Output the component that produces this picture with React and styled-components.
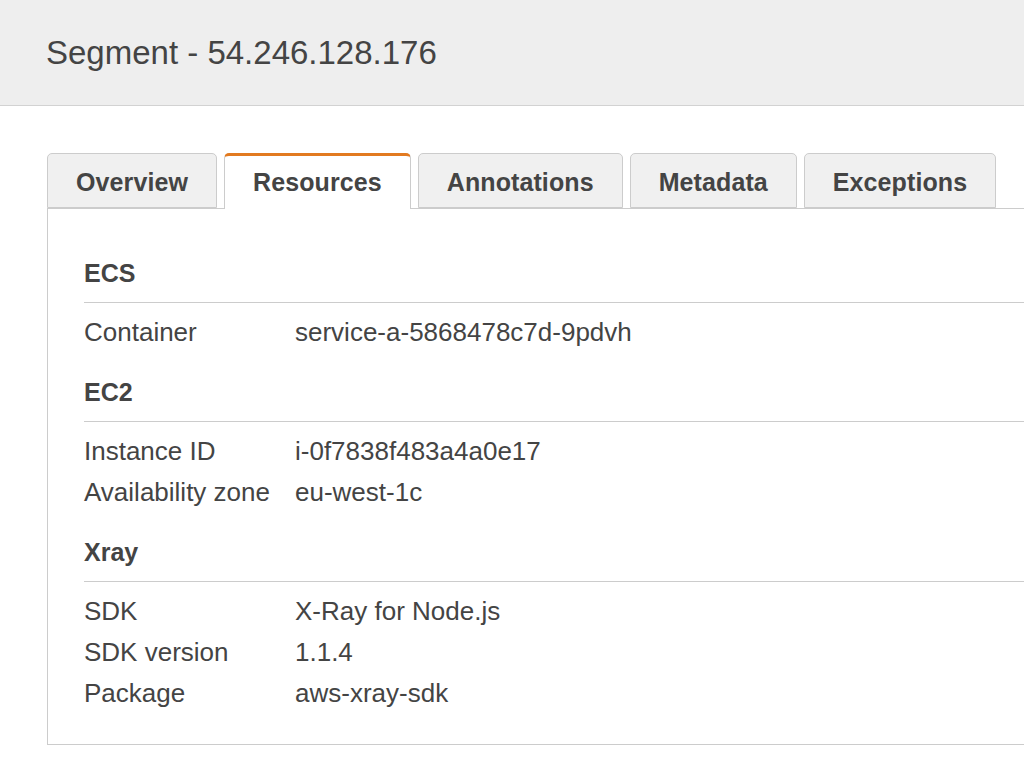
import React, { useState } from "react";
import styled, { createGlobalStyle } from "styled-components";

const Global = createGlobalStyle`
  body {
    margin: 0;
    background: #fff;
    font-family: "Liberation Sans", Arial, Helvetica, sans-serif;
    color: #444;
    overflow: hidden;
  }
`;

const Header = styled.header`
  height: 105px;
  background: #eeeeee;
  border-bottom: 1px solid #d2d2d2;
  display: flex;
  align-items: center;
  padding-left: 46px;
  h1 {
    margin: 0;
    font-size: 33px;
    font-weight: normal;
    color: #444;
  }
`;

const Main = styled.main`
  padding: 47px 0 0 47px;
`;

const TabBar = styled.div`
  display: flex;
  align-items: flex-end;
  gap: 7px;
`;

const Tab = styled.div`
  box-sizing: border-box;
  height: ${(p) => (p.$active ? "56px" : "55px")};
  margin-bottom: ${(p) => (p.$active ? "-1px" : "0")};
  padding: ${(p) => (p.$active ? "0" : "3px")} 28px 0;
  display: flex;
  align-items: center;
  border: 1px solid #cccccc;
  border-bottom: ${(p) => (p.$active ? "none" : "1px solid #cccccc")};
  border-top: ${(p) => (p.$active ? "3px solid #e27a20" : "1px solid #cccccc")};
  border-radius: 5px 5px 0 0;
  background: ${(p) => (p.$active ? "#fff" : "#f0f0f0")};
  font-size: 25px;
  font-weight: bold;
  letter-spacing: 0.1px;
  color: #444;
  cursor: pointer;
  position: relative;
  z-index: ${(p) => (p.$active ? 1 : 0)};
`;

const Panel = styled.div`
  border: 1px solid #cccccc;
  border-right: none;
  padding: 49px 0 30px 36px;
`;

const Section = styled.section`
  & + & {
    margin-top: 24px;
  }
`;

const Heading = styled.h2`
  margin: 0;
  font-size: 25px;
  font-weight: bold;
  line-height: 30px;
  padding-bottom: 14px;
  border-bottom: 1px solid #cccccc;
  color: #444;
`;

const Rows = styled.div`
  padding-top: 9px;
`;

const Row = styled.div`
  display: grid;
  grid-template-columns: 211px 1fr;
  font-size: 26px;
  line-height: 41px;
  color: #444;
`;

const tabs = ["Overview", "Resources", "Annotations", "Metadata", "Exceptions"];

const sections = [
  { title: "ECS", rows: [["Container", "service-a-5868478c7d-9pdvh"]] },
  {
    title: "EC2",
    rows: [
      ["Instance ID", "i-0f7838f483a4a0e17"],
      ["Availability zone", "eu-west-1c"],
    ],
  },
  {
    title: "Xray",
    rows: [
      ["SDK", "X-Ray for Node.js"],
      ["SDK version", "1.1.4"],
      ["Package", "aws-xray-sdk"],
    ],
  },
];

export default function App() {
  const [active, setActive] = useState("Resources");

  return (
    <>
      <Global />
      <Header>
        <h1>Segment - 54.246.128.176</h1>
      </Header>
      <Main>
        <TabBar>
          {tabs.map((t) => (
            <Tab key={t} $active={t === active} onClick={() => setActive(t)}>
              {t}
            </Tab>
          ))}
        </TabBar>
        <Panel>
          {sections.map((s) => (
            <Section key={s.title}>
              <Heading>{s.title}</Heading>
              <Rows>
                {s.rows.map(([k, v]) => (
                  <Row key={k}>
                    <span>{k}</span>
                    <span>{v}</span>
                  </Row>
                ))}
              </Rows>
            </Section>
          ))}
        </Panel>
      </Main>
    </>
  );
}
